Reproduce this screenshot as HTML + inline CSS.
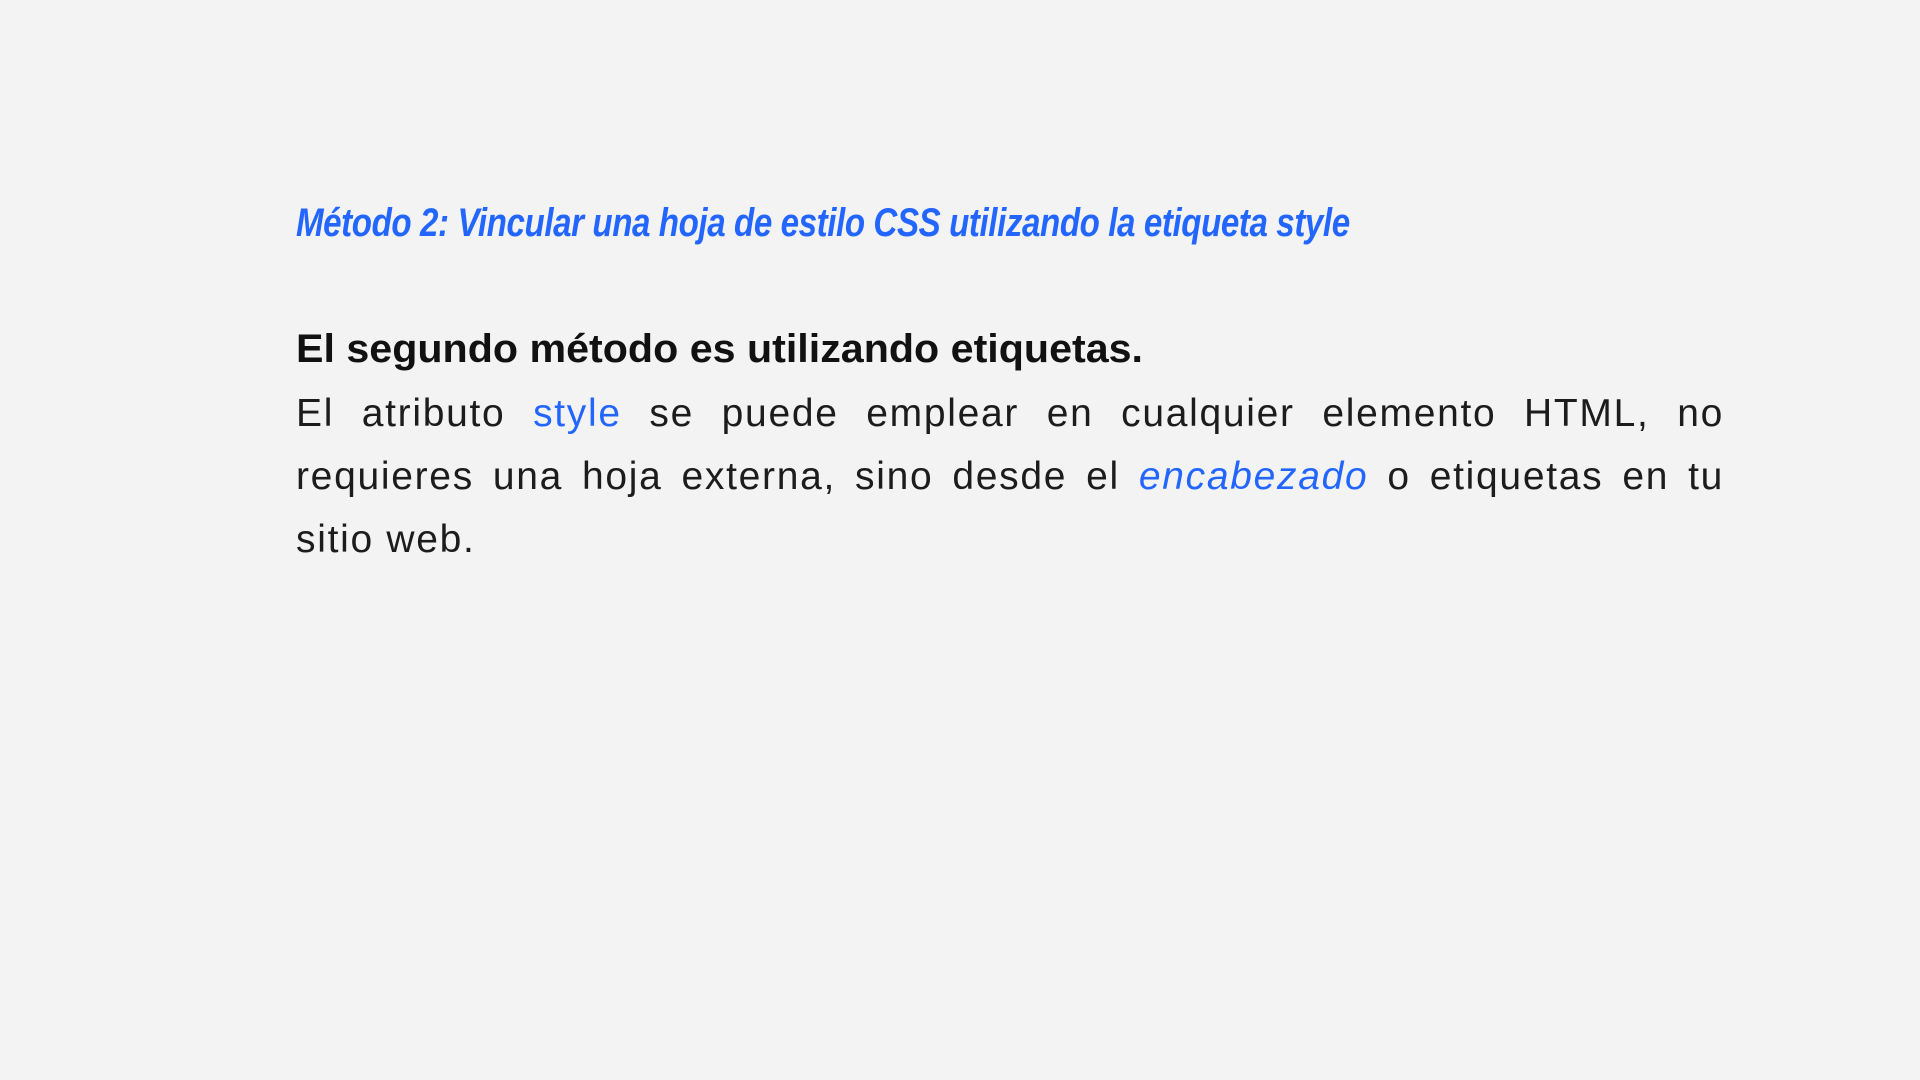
<!DOCTYPE html>
<html><head><meta charset="utf-8"><style>
html,body{margin:0;width:1920px;height:1080px;background:#f3f3f3;overflow:hidden}
.t{position:absolute;left:296px;top:201px;font:italic bold 40px "Liberation Sans",sans-serif;color:#2266ff;white-space:nowrap;transform-origin:0 0;transform:scaleX(0.828);letter-spacing:-0.5px}
.b{position:absolute;left:296px;top:327px;font:bold 40px "Liberation Sans",sans-serif;color:#111;white-space:nowrap;transform-origin:0 0;transform:scaleX(1.03)}
.p{position:absolute;left:296px;top:382px;width:1428px;font:300 39px "Liberation Sans",sans-serif;color:#1c1c1c;line-height:63px;letter-spacing:1.7px}
.j{text-align:justify;text-align-last:justify;white-space:nowrap}
.bl{color:#2266ff}
</style></head><body>
<div class="t">Método 2: Vincular una hoja de estilo CSS utilizando la etiqueta style</div>
<div class="b">El segundo método es utilizando etiquetas.</div>
<div class="p"><div class="j">El atributo <span class="bl">style</span> se puede emplear en cualquier elemento HTML, no</div><div class="j">requieres una hoja externa, sino desde el <i class="bl">encabezado</i> o etiquetas en tu</div><div>sitio web.</div></div>
</body></html>
